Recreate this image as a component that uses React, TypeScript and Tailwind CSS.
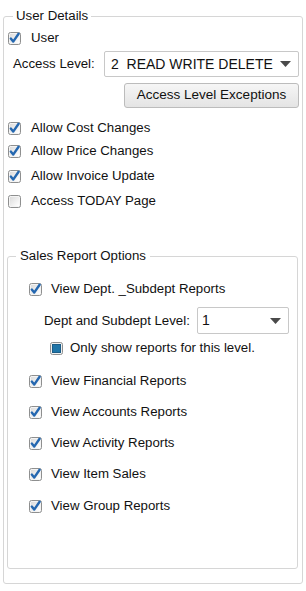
import React from "react";

const font = { fontFamily: '"Liberation Sans", Arial, sans-serif' };

function Check({ checked = true }: { checked?: boolean }) {
  return (
    <svg width="13" height="13" viewBox="0 0 13 13" className="shrink-0">
      <defs>
        <linearGradient id="cbg" x1="0" y1="0" x2="1" y2="1">
          <stop offset="0" stopColor="#dcdcdc" />
          <stop offset="1" stopColor="#ffffff" />
        </linearGradient>
      </defs>
      <rect x="0.5" y="0.5" width="12" height="12" rx="2" fill="#f4f4f4" stroke="#8e8f8f" />
      <rect x="2" y="2" width="9" height="9" fill="url(#cbg)" />
      {checked && (
        <path d="M2.8 6.6 L5.2 9.6 L10.6 1.8" fill="none" stroke="#2467b0" strokeWidth="2.4" strokeLinecap="round" strokeLinejoin="round" />
      )}
    </svg>
  );
}

function Filled() {
  return (
    <svg width="13" height="13" viewBox="0 0 13 13" className="shrink-0">
      <rect x="0.5" y="0.5" width="12" height="12" rx="2" fill="#f0f0f0" stroke="#8e8f8f" />
      <rect x="2.5" y="2.5" width="8" height="8" fill="#1f75a8" stroke="#1b5c86" />
    </svg>
  );
}

function Row({ children, className = "", label, gap = "gap-[10px]" }: { children: React.ReactNode; className?: string; label: string; gap?: string }) {
  return (
    <div className={`flex h-[16px] items-center ${gap} ${className}`}>
      {children}
      <span className="whitespace-nowrap leading-[16px]">{label}</span>
    </div>
  );
}

function Arrow() {
  return (
    <svg width="11" height="6" viewBox="0 0 11 6">
      <path d="M0 0 H11 L5.5 6 Z" fill="#4a4a4a" />
    </svg>
  );
}

export default function App() {
  return (
    <div className="h-[591px] w-[306px] overflow-hidden bg-white pt-[8px] text-[13.25px] text-[#111]" style={font}>
      <fieldset className="mx-[3px] h-[576px] w-[300px] rounded-[3px] border border-[#d6d6d6]">
        <legend className="ml-[9px] px-[3px] leading-[16px]">User Details</legend>
        <Row className="mt-[6px] pl-[4px]" label="User">
          <Check />
        </Row>
        <div className="mt-[5px] flex h-[26px] items-center">
          <span className="pl-[9px] leading-[16px]">Access Level:</span>
          <div className="ml-auto mr-[3px] flex h-[26px] w-[195px] items-center justify-between rounded-[2px] border border-[#c8c8c8] bg-white pl-[6px] pr-[7px] text-[14px]">
            <span className="whitespace-nowrap">2&nbsp; READ WRITE DELETE</span>
            <Arrow />
          </div>
        </div>
        <div className="mt-[6px] flex justify-end pr-[3px]">
          <button className="flex h-[25px] w-[175px] items-center justify-center rounded-[3px] border border-[#bcbcbc] bg-gradient-to-b from-[#f6f6f6] to-[#e4e4e4] text-[13.5px] text-[#111]">
            Access Level Exceptions
          </button>
        </div>
        <Row className="mt-[12px] pl-[4px]" label="Allow Cost Changes">
          <Check />
        </Row>
        <Row className="mt-[7px] pl-[4px]" label="Allow Price Changes">
          <Check />
        </Row>
        <Row className="mt-[9px] pl-[4px]" label="Allow Invoice Update">
          <Check />
        </Row>
        <Row className="mt-[9px] pl-[4px]" label="Access TODAY Page">
          <Check checked={false} />
        </Row>

        <fieldset className="ml-[3px] mt-[39px] h-[321px] w-[291px] rounded-[3px] border border-[#d6d6d6]">
          <legend className="ml-[8px] px-[4px] leading-[16px]">Sales Report Options</legend>
          <Row className="mt-[17px] pl-[21px]" gap="gap-[9px]" label="View Dept. _Subdept Reports">
            <Check />
          </Row>
          <div className="mt-[10px] flex h-[27px] items-center">
            <span className="pl-[36px] leading-[16px]">Dept and Subdept Level:</span>
            <div className="ml-auto mr-[8px] flex h-[27px] w-[92px] items-center justify-between rounded-[2px] border border-[#c8c8c8] bg-white pl-[4px] pr-[7px] text-[14px]">
              <span>1</span>
              <Arrow />
            </div>
          </div>
          <Row className="mt-[6px] pl-[42px]" gap="gap-[7px]" label="Only show reports for this level.">
            <Filled />
          </Row>
          <Row className="mt-[17px] pl-[21px]" gap="gap-[9px]" label="View Financial Reports">
            <Check />
          </Row>
          <Row className="mt-[15px] pl-[21px]" gap="gap-[9px]" label="View Accounts Reports">
            <Check />
          </Row>
          <Row className="mt-[15px] pl-[21px]" gap="gap-[9px]" label="View Activity Reports">
            <Check />
          </Row>
          <Row className="mt-[15px] pl-[21px]" gap="gap-[9px]" label="View Item Sales">
            <Check />
          </Row>
          <Row className="mt-[16px] pl-[21px]" gap="gap-[9px]" label="View Group Reports">
            <Check />
          </Row>
        </fieldset>
      </fieldset>
    </div>
  );
}
